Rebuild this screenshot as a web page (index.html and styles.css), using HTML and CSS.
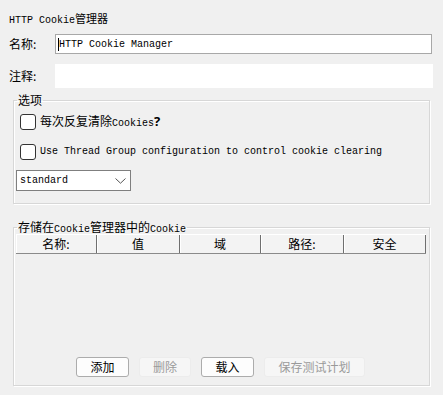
FILE: index.html
```html
<!DOCTYPE html>
<html>
<head>
<meta charset="utf-8">
<link rel="stylesheet" href="styles.css">
</head>
<body>
<div class="page">
  <div class="title"><span class="m">HTTP Cookie</span>管理器</div>
  <div class="row name-row">
    <span class="label">名称:</span>
    <div class="input name-input"><span class="caret"></span><span class="m">HTTP Cookie Manager</span></div>
  </div>
  <div class="row comment-row">
    <span class="label">注释:</span>
    <div class="input comment-input"></div>
  </div>

  <fieldset class="group options">
    <legend>选项</legend>
    <div class="check-row first">
      <span class="box"></span>
      <span class="check-label">每次反复清除<span class="m">Cookies</span><b class="q">?</b></span>
    </div>
    <div class="check-row second">
      <span class="box"></span>
      <span class="check-label m">Use Thread Group configuration to control cookie clearing</span>
    </div>
    <div class="select">
      <span class="m">standard</span>
      <svg class="chev" width="11" height="6" viewBox="0 0 11 6"><polyline points="0.5,0.5 5.5,5.2 10.5,0.5" fill="none" stroke="#555" stroke-width="1"/></svg>
    </div>
  </fieldset>

  <fieldset class="group cookies">
    <legend>存储在<span class="m">Cookie</span>管理器中的<span class="m">Cookie</span></legend>
    <div class="table">
      <div class="thead">
        <div class="th">名称:</div>
        <div class="th">值</div>
        <div class="th">域</div>
        <div class="th">路径:</div>
        <div class="th">安全</div>
      </div>
      <div class="tbody"></div>
    </div>
    <div class="buttons">
      <div class="btn w53">添加</div>
      <div class="btn disabled w52">删除</div>
      <div class="btn w53">载入</div>
      <div class="btn disabled w101">保存测试计划</div>
    </div>
  </fieldset>
</div>
</body>
</html>
```

FILE: styles.css
```css
html, body {
  margin: 0;
  padding: 0;
  background: #f0f0f0;
}
body {
  font-family: "Noto Sans CJK SC", "Noto Sans", sans-serif;
  font-size: 12px;
  color: #000;
  width: 443px;
  height: 395px;
  overflow: hidden;
}
.m {
  font-family: "Liberation Mono", "DejaVu Sans Mono", monospace;
  font-size: 10px;
}
.page {
  display: flex;
  flex-direction: column;
}
.title {
  margin: 11px 0 0 9px;
  height: 14px;
  line-height: 14px;
  font-size: 11px;
}
.title .m { font-size: 10px; }
.row {
  display: flex;
  align-items: center;
  padding-left: 9px;
}
.name-row { margin-top: 9px; height: 20px; }
.comment-row { margin-top: 10px; height: 24px; }
.label {
  width: 46px;
  line-height: 16px;
  font-size: 12px;
}
.input {
  box-sizing: border-box;
  background: #fff;
  display: flex;
  align-items: center;
}
.name-input {
  width: 377px;
  height: 20px;
  border: 1px solid #a8a8a8;
  padding-left: 2px;
}
.caret {
  width: 1px;
  height: 13px;
  background: #000;
  margin-right: 0;
}
.comment-input {
  width: 378px;
  height: 24px;
}
.group {
  margin: 0 13px 0 13px;
  border: 1px solid #d7d7d7;
  box-shadow: inset 1px 1px 0 #fff, 1px 1px 0 #fff;
  padding: 0 3px 0 2px;
  min-width: 0;
}
.group legend {
  padding: 0 1px;
  margin-left: 1px;
  line-height: 14px;
  height: 14px;
  font-size: 12px;
}
.options {
  margin-top: 5px;
  padding-bottom: 12px;
}
.check-row {
  display: flex;
  align-items: center;
  height: 16px;
  margin-left: 4px;
}
.check-row.first { margin-top: 7px; }
.check-row.second { margin-top: 14px; }
.box {
  box-sizing: border-box;
  width: 16px;
  height: 16px;
  border: 1px solid #333;
  border-radius: 3px;
  background: #fff;
  margin-right: 4px;
  flex: none;
}
.check-label {
  white-space: nowrap;
  line-height: 16px;
}
.check-label.m { font-size: 10px; }
.q {
  font-family: "Noto Sans", sans-serif;
  font-weight: bold;
  font-size: 13px;
}
.select {
  box-sizing: border-box;
  margin-top: 10px;
  width: 115px;
  height: 21px;
  border: 1px solid #7f7f7f;
  background: #fff;
  display: flex;
  align-items: center;
  justify-content: space-between;
  padding: 0 4px 0 3px;
}
.cookies {
  margin-top: 16px;
  padding-bottom: 8px;
}
.table {
  display: flex;
  flex-direction: column;
}
.thead {
  display: grid;
  grid-template-columns: 81px 83px 81px 83px 82px;
  height: 20px;
  box-sizing: border-box;
  border-top: 1px solid #fff;
  border-bottom: 1px solid #8a8a8a;
  background: #f3f3f3;
}
.th {
  text-align: center;
  line-height: 18px;
  border-right: 1px solid #6f6f6f;
  box-shadow: inset 1px 0 0 #fff;
}
.tbody {
  height: 95px;
}
.buttons {
  display: flex;
  justify-content: center;
  gap: 10px;
  margin-top: 8px;
  padding-right: 1px;
}
.btn {
  box-sizing: border-box;
  height: 20px;
  line-height: 18px;
  text-align: center;
  background: #fdfdfd;
  border: 1px solid #acacac;
  border-radius: 3px;
  font-size: 12px;
}
.btn.disabled {
  background: #f6f6f6;
  border-color: #ececec;
  color: #9a9a9a;
}
.w53 { width: 53px; }
.w52 { width: 52px; }
.w101 { width: 101px; }
```
